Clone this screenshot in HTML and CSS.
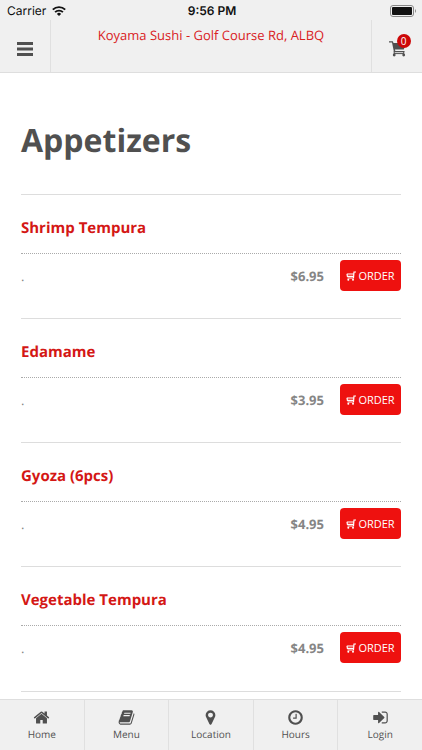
FILE: index.html
```html
<!DOCTYPE html>
<html lang="en">
<head>
<meta charset="utf-8">
<meta name="viewport" content="width=device-width, initial-scale=1">
<title>Koyama Sushi - Appetizers</title>
<link rel="stylesheet" href="styles.css">
</head>
<body>
<svg class="sprite" aria-hidden="true">
  <symbol id="order-cart" viewBox="0 0 10 10"><path d="M10 1H8L7.500 7H1.500M.8 3h7M1 3l.4 2.300h6.300" fill="none" stroke="currentColor" stroke-width="1.200"/><circle cx="2.300" cy="8.700" r="1"/><circle cx="7" cy="8.700" r="1"/></symbol>
</svg>
<header class="top">
  <div class="status">
    <div class="carrier"><span>Carrier</span>
      <svg class="wifi" viewBox="0 0 14 10" aria-hidden="true"><g fill="none" stroke="currentColor" stroke-width="1.900"><path d="M.8 3.700a8.800 8.800 0 0 1 12.400 0"/><path d="M3.100 6.200a5.500 5.500 0 0 1 7.800 0"/></g><path d="M4.900 7.900a3 3 0 0 1 4.200 0L7 10Z"/></svg>
    </div>
    <time class="clock">9:56 PM</time>
    <svg class="battery" viewBox="0 0 27 12" aria-hidden="true"><rect x=".5" y=".5" width="23" height="11" rx="2.500" fill="none" stroke="#888"/><rect x="2" y="2" width="20" height="8" rx="1"/><path d="M25 4q2 2 0 4Z" fill="#888"/></svg>
  </div>
  <div class="bar">
    <button class="bar-button" aria-label="Open menu"><svg class="burger" viewBox="0 0 16 14"><path d="M0 0h16v3H0ZM0 5.500h16v3H0ZM0 11h16v3H0Z"/></svg></button>
    <a class="place" href="#">Koyama Sushi - Golf Course Rd, ALBQ</a>
    <button class="bar-button cart" aria-label="Cart"><span class="cart-box"><svg class="cart-icon" viewBox="0 0 17 16"><path d="M0 .3h3.800l.7 1.700H17l-2.200 6.500H6l.3 1.500H15.500v1.300H5L3 1.600H0Z"/><path d="M5.200 10v4M14.700 10.500v3.500M5 12.600h9.700" fill="none" stroke="currentColor"/><circle cx="5.200" cy="14" r="1.400"/><circle cx="14.700" cy="14" r="1.400"/></svg><span class="badge">0</span></span></button>
  </div>
</header>
<main class="content">
  <h1>Appetizers</h1>
  <article class="item">
    <h2>Shrimp Tempura</h2>
    <div class="row"><p>.</p><strong>$6.95</strong><button class="order"><svg aria-hidden="true"><use href="#order-cart"/></svg>ORDER</button></div>
  </article>
  <article class="item">
    <h2>Edamame</h2>
    <div class="row"><p>.</p><strong>$3.95</strong><button class="order"><svg aria-hidden="true"><use href="#order-cart"/></svg>ORDER</button></div>
  </article>
  <article class="item">
    <h2>Gyoza (6pcs)</h2>
    <div class="row"><p>.</p><strong>$4.95</strong><button class="order"><svg aria-hidden="true"><use href="#order-cart"/></svg>ORDER</button></div>
  </article>
  <article class="item">
    <h2>Vegetable Tempura</h2>
    <div class="row"><p>.</p><strong>$4.95</strong><button class="order"><svg aria-hidden="true"><use href="#order-cart"/></svg>ORDER</button></div>
  </article>
</main>
<nav class="tabs">
  <a href="#"><svg viewBox="0 0 1792 1792" aria-hidden="true"><path d="M1472 992v480q0 26-19 45t-45 19h-384v-384h-256v384h-384q-26 0-45-19t-19-45v-480q0-1 .5-3t.5-3l575-474 575 474q1 2 1 6zm223-69l-62 74q-8 9-21 11h-3q-13 0-21-7l-692-577-692 577q-12 8-24 7-13-2-21-11l-62-74q-8-10-7-23.500t11-21.500l719-599q32-26 76-26t76 26l244 204v-195q0-14 9-23t23-9h192q14 0 23 9t9 23v408l219 182q10 8 11 21.500t-7 23.500z"/></svg>Home</a>
  <a href="#"><svg viewBox="0 0 1792 1792" aria-hidden="true"><path d="M1703 478q40 57 18 129l-275 906q-19 64-76.500 107.500t-122.500 43.500h-923q-77 0-148.500-53.500t-99.500-131.500q-24-67-2-127 0-4 3-27t4-37q1-8-3-21.500t-3-19.500q2-11 8-21t16.500-23.500 16.500-23.500q23-38 45-91.500t30-91.500q3-10 .5-30t-.5-28q3-11 17-28t17-23q21-36 42-92t25-90q1-9-2.500-32t.5-28q4-13 22-30.500t22-22.500q19-26 42.500-84.500t27.500-96.500q1-8-3-25.500t-2-26.500q2-8 9-18t18-23 17-21q8-12 16.500-30.500t15-35 16-36 19.500-32 26.500-23.500 36-11.500 47.500 5.500l-1 3q38-9 51-9h761q74 0 114 56t18 130l-274 906q-36 119-71.500 153.500t-128.500 34.500h-869q-27 0-38 15-11 16-1 43 24 70 144 70h923q29 0 56-15.500t35-41.500l300-987q7-22 5-57 38 15 59 43zm-1064 2q-4 13 2 22.500t20 9.500h608q13 0 25.500-9.500t16.500-22.500l21-64q4-13-2-22.500t-20-9.500h-608q-13 0-25.500 9.500t-16.500 22.500zm-83 256q-4 13 2 22.500t20 9.500h608q13 0 25.500-9.500t16.500-22.500l21-64q4-13-2-22.500t-20-9.500h-608q-13 0-25.500 9.500t-16.500 22.500z"/></svg>Menu</a>
  <a href="#"><svg viewBox="0 0 1792 1792" aria-hidden="true"><path d="M1152 640q0-106-75-181t-181-75-181 75-75 181 75 181 181 75 181-75 75-181zm256 0q0 109-33 179l-364 774q-16 33-47.500 52t-67.500 19-67.500-19-46.500-52l-365-774q-33-70-33-179 0-212 150-362t362-150 362 150 150 362z"/></svg>Location</a>
  <a href="#"><svg viewBox="0 0 1792 1792" aria-hidden="true"><path d="M1024 544v448q0 14-9 23t-23 9h-320q-14 0-23-9t-9-23v-64q0-14 9-23t23-9h224v-352q0-14 9-23t23-9h64q14 0 23 9t9 23zm416 352q0-148-73-273t-198-198-273-73-273 73-198 198-73 273 73 273 198 198 273 73 273-73 198-198 73-273zm224 0q0 209-103 385.500t-279.500 279.500-385.500 103-385.500-103-279.500-279.500-103-385.500 103-385.500 279.500-279.500 385.500-103 385.500 103 279.500 279.500 103 385.500z"/></svg>Hours</a>
  <a href="#"><svg viewBox="0 0 1792 1792" aria-hidden="true"><path d="M1312 896q0 26-19 45l-544 544q-19 19-45 19t-45-19-19-45v-288h-448q-26 0-45-19t-19-45v-384q0-26 19-45t45-19h448v-288q0-26 19-45t45-19 45 19l544 544q19 19 19 45zm352-352v704q0 119-84.500 203.500t-203.500 84.500h-320q-13 0-22.500-9.500t-9.500-22.500q0-4-1-20t-.5-26.500 3-23.500 10-19.500 20.500-6.500h320q66 0 113-47t47-113v-704q0-66-47-113t-113-47h-312l-11.500-1-11.500-3-8-5.500-7-9-2-13.500q0-4-1-20t-.5-26.500 3-23.500 10-19.500 20.500-6.500h320q119 0 203.500 84.500t84.500 203.500z"/></svg>Login</a>
</nav>
</body>
</html>
```
FILE: styles.css
```css
* { box-sizing: border-box; }
body {
  margin: 0;
  height: 100vh;
  display: flex;
  flex-direction: column;
  background: #fff;
  color: #505050;
  font-family: "Open Sans", sans-serif;
  text-rendering: geometricPrecision;
}
h1, h2, p { margin: 0; }
a { color: inherit; text-decoration: none; }
button { margin: 0; padding: 0; border: 0; background: none; color: inherit; font: inherit; }
svg { display: block; fill: currentColor; }
.sprite { position: absolute; width: 0; height: 0; }

.top { background: #f0f0f0; border-bottom: 1px solid #dedede; }
.status {
  display: grid;
  grid-template-columns: 1fr auto 1fr;
  align-items: center;
  height: 20px;
  padding: 2px 5px 0 7px;
  color: #111;
  font: 12px/18px Inter, sans-serif;
}
.carrier { display: flex; align-items: center; gap: 6px; }
.wifi { width: 14px; height: 10px; }
.clock { font-weight: 600; }
.battery { width: 27px; height: 12px; justify-self: end; }
.bar { display: flex; height: 52px; }
.bar-button { display: grid; place-items: center; width: 51px; padding-top: 5px; border-right: 1px solid #e0e0e0; }
.bar-button.cart { border-right: 0; border-left: 1px solid #e0e0e0; }
.burger { width: 16px; height: 14px; }
.place { flex: 1; padding-top: 5px; color: #d9211e; font-size: 13px; line-height: 20px; text-align: center; }
.cart-box { position: relative; }
.cart-icon { width: 17px; height: 16px; }
.badge {
  position: absolute;
  top: -7px;
  right: -5px;
  width: 14px;
  height: 14px;
  border-radius: 50%;
  background: #cc0808;
  color: #fff;
  font-size: 10px;
  line-height: 14px;
  text-align: center;
}

.content { flex: 1; min-height: 0; overflow: hidden; padding: 44px 21px 0; }
h1 { padding-bottom: 29px; font-size: 32px; line-height: 48px; }
.item { height: 124px; border-top: 1px solid #ddd; }
.item:last-child { height: 126px; border-bottom: 1px solid #ddd; }
h2 { padding: 22px 0 14px; border-bottom: 1px dotted #aaa; color: #d41715; font-size: 15px; line-height: 22px; }
.row { display: flex; align-items: center; padding-top: 6px; color: #858585; font-size: 13px; }
.row p { flex: 1; }
.order {
  display: flex;
  align-items: center;
  justify-content: center;
  gap: 2px;
  width: 61px;
  height: 31px;
  margin-left: 16px;
  border-radius: 4px;
  background: #ee110f;
  color: #fff;
  font-size: 11px;
}
.order svg { width: 10px; height: 10px; }

.tabs { display: flex; height: 51px; background: #f0f0f0; border-top: 1px solid #dedede; }
.tabs a {
  flex: 1;
  display: flex;
  flex-direction: column;
  align-items: center;
  padding-top: 9px;
  font-size: 10px;
  line-height: 16px;
}
.tabs a + a { border-left: 1px solid #e0e0e0; }
.tabs svg { width: 17px; height: 17px; }
```
